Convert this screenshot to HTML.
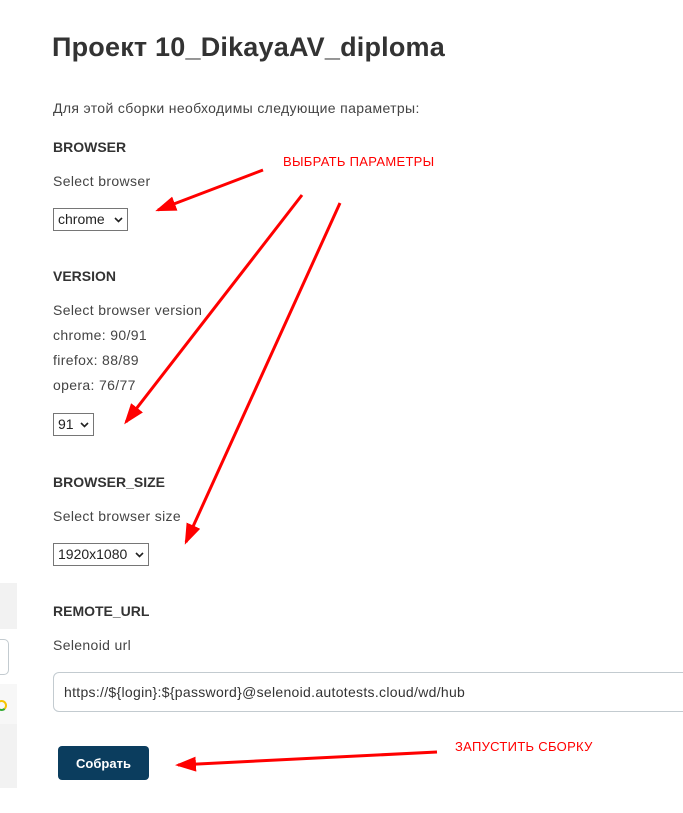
<!DOCTYPE html>
<html><head><meta charset="utf-8"><style>
body{margin:0;width:683px;height:813px;background:#fff;position:relative;overflow:hidden;font-family:"Liberation Sans","DejaVu Sans",sans-serif;color:#333}
.a{position:absolute;white-space:nowrap}
.t{font-size:14px;color:#444;letter-spacing:0.35px}
.h{font-size:14px;font-weight:bold;color:#333}
.sel{position:absolute;border:1px solid #767676;font-size:14px;line-height:21px;padding-left:4px;box-sizing:border-box;height:23px;color:#222}
.sel svg{position:absolute;right:4px;top:8px}
.r{color:#f00;font-size:13px;letter-spacing:0.3px}
</style></head><body>
<div class="a" style="left:0;top:583px;width:17px;height:46px;background:#f2f2f2"></div>
<div class="a" style="left:-10px;top:639px;width:17px;height:34px;border:1px solid #c3cbd0;border-radius:5px"></div>
<div class="a" style="left:0;top:684px;width:17px;height:40px;background:#f7f7f7"></div>
<div class="a" style="left:-4px;top:700px;width:7px;height:7px;border:2px solid #f5c400;border-radius:50%;border-bottom-color:#3a3"></div>
<div class="a" style="left:0;top:724px;width:17px;height:64px;background:#f2f2f2"></div>

<div class="a" style="left:52px;top:32px;font-size:27px;font-weight:bold;color:#333;letter-spacing:0.2px">Проект 10_DikayaAV_diploma</div>
<div class="a t" style="left:53px;top:100px">Для этой сборки необходимы следующие параметры:</div>
<div class="a h" style="left:53px;top:139px">BROWSER</div>
<div class="a t" style="left:53px;top:173px">Select browser</div>
<div class="sel" style="left:53px;top:208px;width:75px">chrome<svg width="9" height="6"><path d="M1 1l3.5 3.5L8 1" stroke="#222" stroke-width="1.6" fill="none"/></svg></div>
<div class="a h" style="left:53px;top:268px">VERSION</div>
<div class="a t" style="left:53px;top:302px">Select browser version</div>
<div class="a t" style="left:53px;top:327px">chrome: 90/91</div>
<div class="a t" style="left:53px;top:352px">firefox: 88/89</div>
<div class="a t" style="left:53px;top:377px">opera: 76/77</div>
<div class="sel" style="left:53px;top:413px;width:41px">91<svg width="9" height="6"><path d="M1 1l3.5 3.5L8 1" stroke="#222" stroke-width="1.6" fill="none"/></svg></div>
<div class="a h" style="left:53px;top:474px">BROWSER_SIZE</div>
<div class="a t" style="left:53px;top:508px">Select browser size</div>
<div class="sel" style="left:53px;top:543px;width:96px">1920x1080<svg width="9" height="6"><path d="M1 1l3.5 3.5L8 1" stroke="#222" stroke-width="1.6" fill="none"/></svg></div>
<div class="a h" style="left:53px;top:603px">REMOTE_URL</div>
<div class="a t" style="left:53px;top:637px">Selenoid url</div>
<div class="a" style="left:53px;top:672px;width:660px;height:40px;border:1px solid #c3cbd0;border-radius:6px;box-sizing:border-box;font-size:14px;line-height:38px;padding-left:10px;color:#333;letter-spacing:0.3px">https://${login}:${password}@selenoid.autotests.cloud/wd/hub</div>
<div class="a" style="left:58px;top:746px;width:91px;height:34px;background:#0b3d5e;border-radius:4px;color:#fff;font-size:13px;font-weight:bold;text-align:center;line-height:36px">Собрать</div>

<div class="a r" style="left:283px;top:154px">ВЫБРАТЬ ПАРАМЕТРЫ</div>
<div class="a r" style="left:455px;top:739px">ЗАПУСТИТЬ СБОРКУ</div>
<svg class="a" style="left:0;top:0" width="683" height="813">
<defs><marker id="m" markerWidth="7" markerHeight="5" refX="6" refY="2.5" orient="auto" markerUnits="strokeWidth"><path d="M0 0L7 2.5L0 5z" fill="#f00"/></marker></defs>
<g stroke="#f00" stroke-width="3" fill="none" marker-end="url(#m)">
<line x1="263" y1="170" x2="158" y2="210"/>
<line x1="302" y1="195" x2="126" y2="422"/>
<line x1="340" y1="203" x2="186" y2="542"/>
<line x1="437" y1="752" x2="178" y2="765"/>
</g></svg>
</body></html>
